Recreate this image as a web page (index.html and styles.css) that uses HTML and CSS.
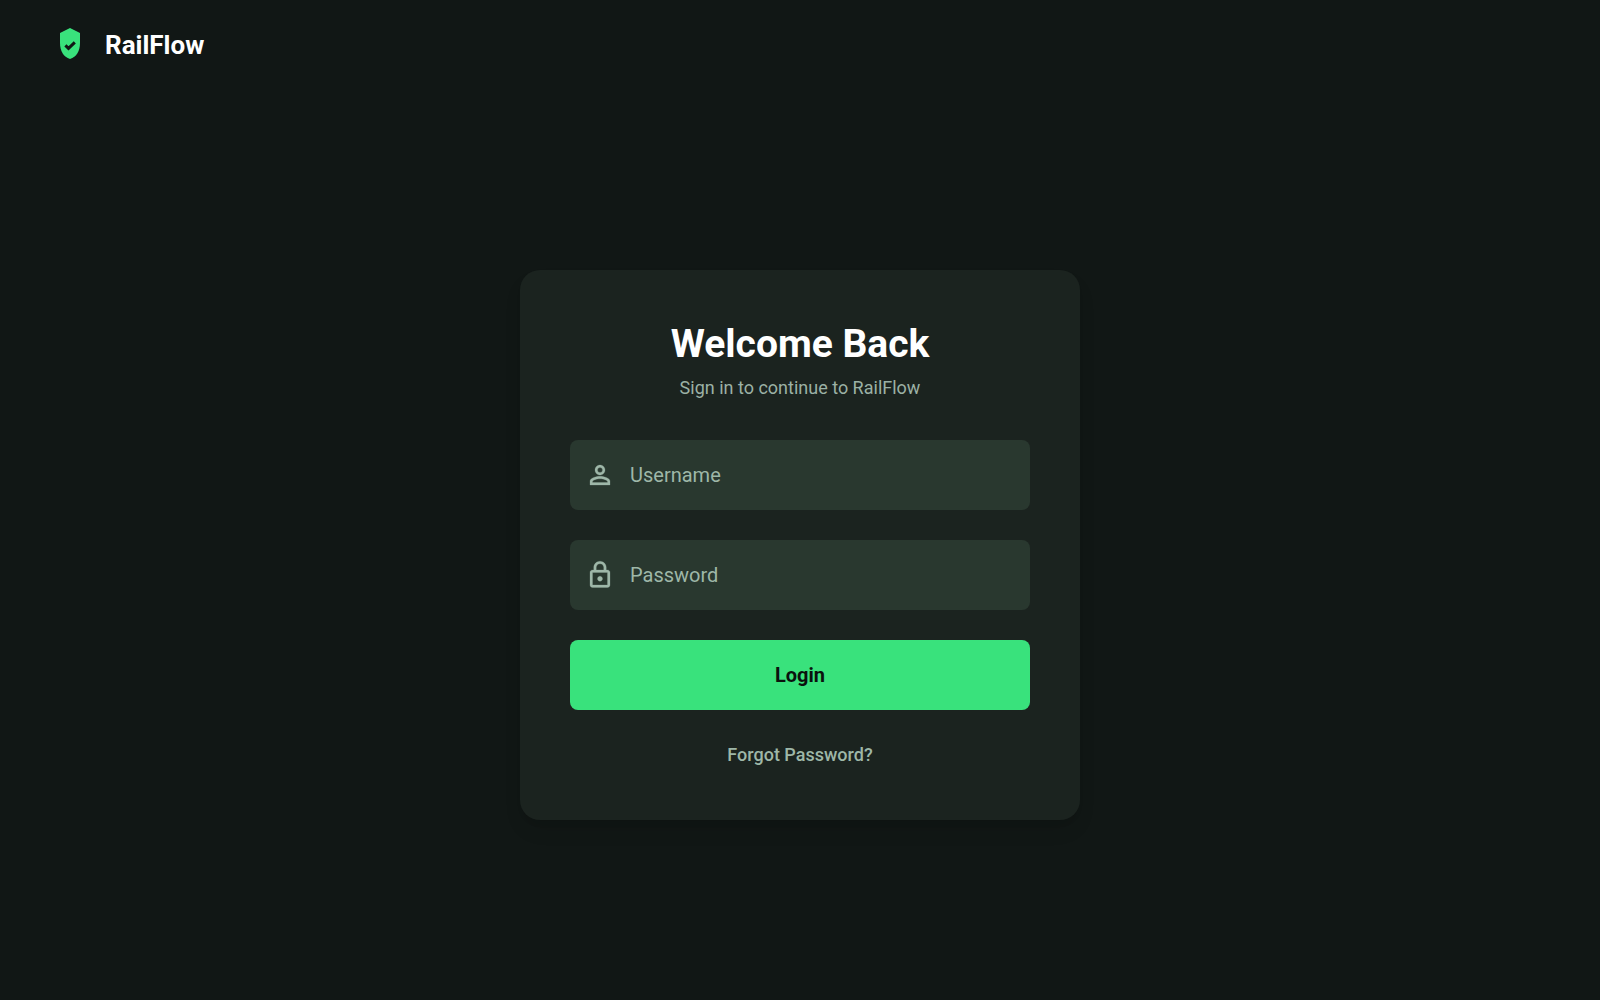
FILE: index.html
```html
<!DOCTYPE html>
<html lang="en">
<head>
<meta charset="utf-8">
<meta name="viewport" content="width=device-width, initial-scale=1">
<title>RailFlow - Login</title>
<link rel="stylesheet" href="styles.css">
</head>
<body>
<header class="header">
  <svg class="logo" viewBox="0 0 20 34" aria-hidden="true">
    <path class="logo-shield" d="M10 0 20 5V15C20 23 16.500 29 10 31 3.500 29 0 23 0 15V5Z"/>
    <path class="logo-check" d="M5.400 17.300 8.500 20.300 14.800 14.300"/>
  </svg>
  <span class="brand">RailFlow</span>
</header>
<main class="main">
  <section class="card">
    <div class="heading">
      <h1 class="title">Welcome Back</h1>
      <p class="subtitle">Sign in to continue to RailFlow</p>
    </div>
    <form class="form">
      <label class="field">
        <svg class="icon" viewBox="0 0 24 24" aria-hidden="true"><path d="M12 6a2 2 0 1 1 0 4 2 2 0 0 1 0-4m0 9c2.700 0 5.800 1.290 6 2v1H6v-1c.2-.710 3.300-2 6-2M12 4C9.790 4 8 5.790 8 8s1.790 4 4 4 4-1.790 4-4-1.790-4-4-4m0 9c-2.670 0-8 1.340-8 4v3h16v-3c0-2.660-5.330-4-8-4"/></svg>
        <input class="input" type="text" name="username" placeholder="Username" aria-label="Username">
      </label>
      <label class="field">
        <svg class="icon" viewBox="0 0 24 24" aria-hidden="true"><path d="M18 8h-1V6c0-2.760-2.240-5-5-5S7 3.240 7 6v2H6c-1.100 0-2 .9-2 2v10c0 1.100.9 2 2 2h12c1.100 0 2-.9 2-2V10c0-1.100-.9-2-2-2M9 6c0-1.660 1.340-3 3-3s3 1.340 3 3v2H9Zm9 14H6V10h12Zm-6-3c1.100 0 2-.9 2-2s-.9-2-2-2-2 .9-2 2 .9 2 2 2"/></svg>
        <input class="input" type="password" name="password" placeholder="Password" aria-label="Password">
      </label>
      <button class="button" type="submit">Login</button>
    </form>
    <a class="forgot" href="#">Forgot Password?</a>
  </section>
</main>
</body>
</html>
```
FILE: styles.css
```css
* { box-sizing: border-box; }

body {
  margin: 0;
  min-height: 100vh;
  display: flex;
  flex-direction: column;
  background: #111715;
  color: #fff;
  font-family: Roboto, "Liberation Sans", sans-serif;
}

.header {
  display: flex;
  align-items: center;
  gap: 25px;
  height: 90px;
  padding: 0 60px;
}

.logo { width: 20px; height: 34px; }
.logo-shield { fill: #39e27c; }
.logo-check { fill: none; stroke: #111715; stroke-width: 3; }
.brand { font-size: 26px; line-height: 30px; font-weight: 700; }

.main {
  flex: 1;
  display: flex;
  align-items: center;
  justify-content: center;
}

.card {
  width: 100%;
  max-width: 560px;
  padding: 50px 50px 55px;
  border-radius: 20px;
  background: #1b231f;
  box-shadow: 0 12px 20px -4px rgba(0, 0, 0, .12), 0 5px 8px -5px rgba(0, 0, 0, .12);
  text-align: center;
}

.heading { margin-bottom: 40px; }
.title { margin: 0; font-size: 39px; line-height: 48px; font-weight: 700; }
.subtitle { margin: 7px 0 0; font-size: 18px; line-height: 25px; color: #9bb1a5; }

.form { display: flex; flex-direction: column; gap: 30px; }

.field {
  display: flex;
  align-items: center;
  gap: 15px;
  height: 70px;
  padding: 0 15px;
  border-radius: 8px;
  background: #29382f;
}

.icon {
  width: 30px;
  height: 30px;
  fill: #9eb7a8;
  stroke: #9eb7a8;
  stroke-width: .2;
}

.input {
  flex: 1;
  min-width: 0;
  padding: 0;
  border: 0;
  outline: 0;
  background: none;
  color: #fff;
  font: 400 20px/30px Roboto, "Liberation Sans", sans-serif;
}
.input::placeholder { color: #9eb7a8; opacity: 1; }

.button {
  height: 70px;
  border: 0;
  border-radius: 8px;
  background: #39e27c;
  color: #0b120e;
  font: 700 20px/30px Roboto, "Liberation Sans", sans-serif;
}

.forgot {
  display: block;
  margin-top: 35px;
  font-size: 18px;
  line-height: 20px;
  font-weight: 500;
  color: #9eb7a8;
  text-decoration: none;
}
```
